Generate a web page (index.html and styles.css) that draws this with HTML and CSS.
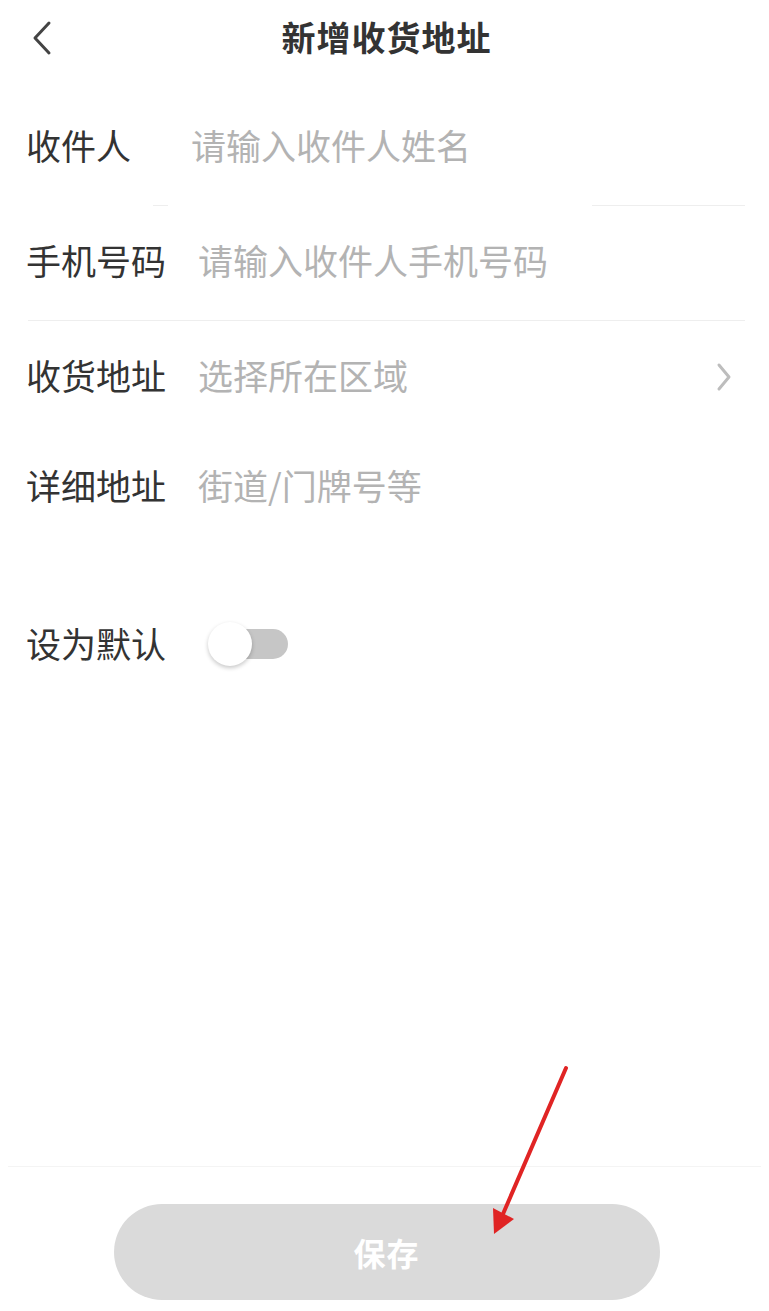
FILE: index.html
```html
<!DOCTYPE html>
<html lang="zh-CN">
<head>
<meta charset="utf-8">
<title>新增收货地址</title>
<link rel="stylesheet" href="styles.css">
</head>
<body>
<div class="page">
  <header class="header">
    <svg class="back" width="24" height="36" viewBox="0 0 24 36"><polyline points="19,3 5,18 19,33" fill="none" stroke="#444" stroke-width="3" stroke-linecap="round" stroke-linejoin="round"/></svg>
    <h1 class="title">新增收货地址</h1>
  </header>
  <form class="form">
    <div class="row row-first">
      <label class="label label-short">收件人</label>
      <input class="field" type="text" placeholder="请输入收件人姓名">
    </div>
    <div class="row row-line">
      <label class="label">手机号码</label>
      <input class="field" type="text" placeholder="请输入收件人手机号码">
    </div>
    <div class="row">
      <label class="label">收货地址</label>
      <input class="field" type="text" placeholder="选择所在区域" readonly>
      <svg class="more" width="18" height="30" viewBox="0 0 18 30"><polyline points="4,3 14,15 4,27" fill="none" stroke="#bdbdbd" stroke-width="3" stroke-linecap="round" stroke-linejoin="round"/></svg>
    </div>
    <div class="row row-tall">
      <label class="label">详细地址</label>
      <textarea class="field area" placeholder="街道/门牌号等"></textarea>
    </div>
    <div class="row">
      <label class="label">设为默认</label>
      <span class="switch"><span class="knob"></span></span>
    </div>
  </form>
  <div class="spacer"></div>
  <footer class="footer">
    <button class="save" type="button">保存</button>
  </footer>
  <svg class="arrow" width="769" height="1311" viewBox="0 0 769 1311">
    <line x1="566" y1="1068" x2="503" y2="1214" stroke="#e02424" stroke-width="4" stroke-linecap="round"/>
    <polygon points="493,1208 514,1219 494,1234" fill="#e02424"/>
  </svg>
</div>
</body>
</html>
```
FILE: styles.css
```css
html, body {
  margin: 0;
  padding: 0;
  background: #fff;
}
body {
  font-family: "Noto Sans CJK SC", "Noto Sans", sans-serif;
  color: #333;
}
.page {
  position: relative;
  width: 769px;
  height: 1311px;
  display: flex;
  flex-direction: column;
  overflow: hidden;
}
.header {
  height: 80px;
  box-sizing: border-box;
  padding-bottom: 8px;
  display: flex;
  align-items: center;
  justify-content: center;
  position: relative;
}
.back {
  position: absolute;
  left: 30px;
  top: 20px;
}
.title {
  margin: 0;
  font-size: 34px;
  font-weight: 700;
  color: #333;
  letter-spacing: 1px;
  padding-left: 4px;
}
.form {
  padding-top: 11px;
  display: flex;
  flex-direction: column;
}
.row {
  height: 115px;
  box-sizing: border-box;
  padding-bottom: 8px;
  margin: 0 24px 0 26px;
  display: flex;
  align-items: center;
}
.row-first {
  margin-left: 28px;
  padding-left: 0;
  background: linear-gradient(to right,
    transparent 125px, #eeeeee 125px, #eeeeee 140px, transparent 140px,
    transparent 564px, #eeeeee 564px) no-repeat left bottom / 100% 1px;
}
.row-first .label {
  margin-left: -2px;
}
.row-line {
  margin-left: 28px;
  border-bottom: 1px solid #eeeeee;
}
.row-line .label {
  margin-left: -2px;
}
.row-tall {
  height: 153px;
  align-items: flex-start;
  padding-top: 24px;
  padding-bottom: 0;
}
.label {
  flex: 0 0 auto;
  font-size: 35px;
  line-height: 49px;
  color: #333;
  margin-right: 32px;
}
.label-short {
  min-width: 133px;
}
.field {
  flex: 1;
  min-width: 0;
  border: 0;
  outline: none;
  padding: 0;
  margin: 0;
  background: transparent;
  font-family: inherit;
  font-size: 35px;
  line-height: 49px;
  height: 49px;
  color: #333;
}
.field::placeholder {
  color: #b3b3b3;
}
.area {
  resize: none;
  height: 98px;
}
.more {
  flex: 0 0 auto;
  margin-right: 12px;
  margin-top: 4px;
}
.switch {
  position: relative;
  margin-left: 10px;
  width: 80px;
  height: 30px;
  margin-top: 2px;
}
.switch::before {
  content: "";
  position: absolute;
  left: 5px;
  right: 0;
  top: 0;
  bottom: 0;
  background: #c6c6c6;
  border-radius: 15px;
}
.knob {
  position: absolute;
  left: 0;
  top: -7px;
  width: 44px;
  height: 44px;
  border-radius: 50%;
  background: #fff;
  box-shadow: 0 2px 4px rgba(0, 0, 0, 0.22);
}
.spacer {
  flex: 1;
}
.footer {
  border-top: 1px solid #f4f4f4;
  margin: 0 8px;
  padding: 37px 0 11px;
  display: flex;
  justify-content: center;
}
.save {
  width: 546px;
  height: 96px;
  margin-left: 4px;
  border: 0;
  border-radius: 48px;
  background: #dadada;
  color: #fff;
  font-family: inherit;
  font-size: 32px;
  font-weight: 700;
  letter-spacing: 1px;
}
.arrow {
  position: absolute;
  left: 0;
  top: 0;
  pointer-events: none;
}
```
